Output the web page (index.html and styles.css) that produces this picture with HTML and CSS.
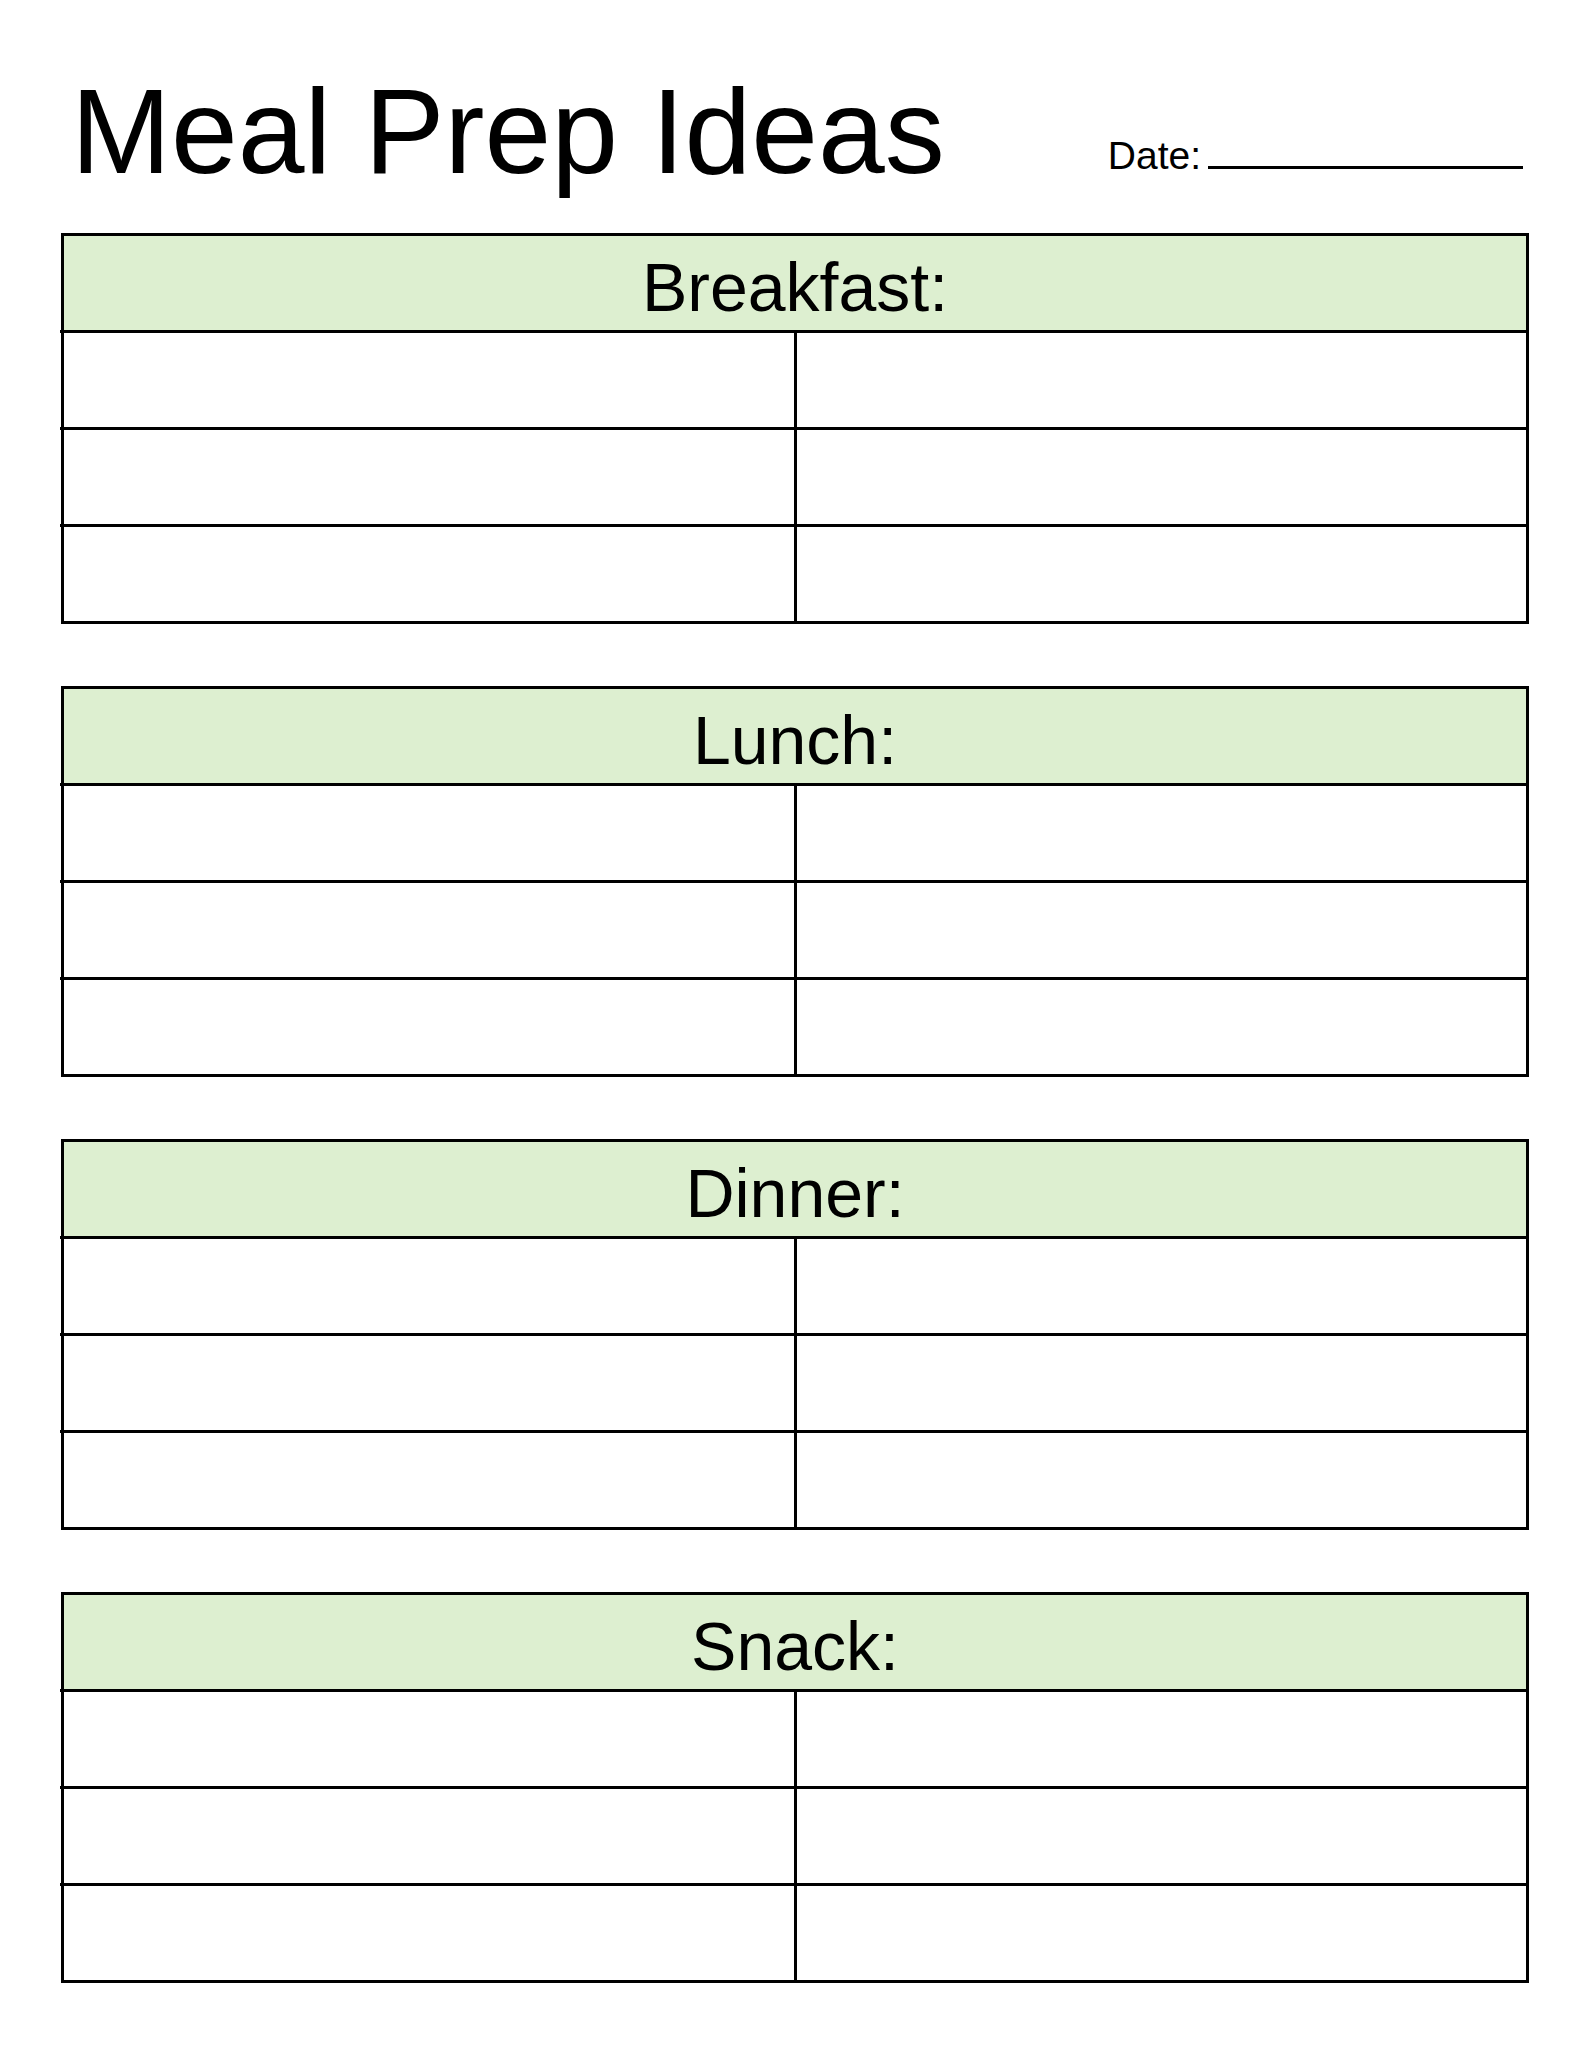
FILE: index.html
```html
<!DOCTYPE html>
<html lang="en">
<head>
<meta charset="utf-8">
<title>Meal Prep Ideas</title>
<link rel="stylesheet" href="styles.css">
</head>
<body>
<div class="page">
  <header class="top">
    <h1 class="title">Meal Prep Ideas</h1>
    <div class="date">Date:<span class="date-line"></span></div>
  </header>

  <section class="meal">
    <div class="meal-head">Breakfast:</div>
    <div class="row"><div class="cell"></div><div class="cell"></div></div>
    <div class="row"><div class="cell"></div><div class="cell"></div></div>
    <div class="row"><div class="cell"></div><div class="cell"></div></div>
  </section>

  <section class="meal">
    <div class="meal-head">Lunch:</div>
    <div class="row"><div class="cell"></div><div class="cell"></div></div>
    <div class="row"><div class="cell"></div><div class="cell"></div></div>
    <div class="row"><div class="cell"></div><div class="cell"></div></div>
  </section>

  <section class="meal">
    <div class="meal-head">Dinner:</div>
    <div class="row"><div class="cell"></div><div class="cell"></div></div>
    <div class="row"><div class="cell"></div><div class="cell"></div></div>
    <div class="row"><div class="cell"></div><div class="cell"></div></div>
  </section>

  <section class="meal">
    <div class="meal-head">Snack:</div>
    <div class="row"><div class="cell"></div><div class="cell"></div></div>
    <div class="row"><div class="cell"></div><div class="cell"></div></div>
    <div class="row"><div class="cell"></div><div class="cell"></div></div>
  </section>
</div>
</body>
</html>
```

FILE: styles.css
```css
html, body {
  margin: 0;
  padding: 0;
  background: #ffffff;
}

body {
  font-family: "Liberation Sans", Arial, sans-serif;
  color: #000000;
}

.page {
  width: 1468px;
  padding: 71px 54px 60px 61px;
  display: flex;
  flex-direction: column;
  gap: 62px;
}

.top {
  display: flex;
  align-items: flex-end;
  justify-content: space-between;
  padding: 0 6px 0 10px;
  margin-bottom: -20px;
}

.title {
  margin: 0;
  font-size: 120px;
  line-height: 120px;
  font-weight: normal;
}

.date {
  font-size: 39px;
  line-height: 39px;
  margin-bottom: 16px;
}

.date-line {
  display: inline-block;
  width: 315px;
  height: 0;
  margin-left: 7px;
  border-bottom: 3px solid #000000;
  vertical-align: baseline;
}

.meal {
  border: 3px solid #000000;
  display: flex;
  flex-direction: column;
}

.meal-head {
  box-sizing: content-box;
  height: 87px;
  padding-top: 7px;
  background: #ddefd0;
  display: flex;
  align-items: center;
  justify-content: center;
  font-size: 68px;
  line-height: 1;
  border-bottom: 3px solid #000000;
  position: relative;
}

.row {
  display: grid;
  grid-template-columns: calc(50% + 2px) 1fr;
  height: 94px;
  border-bottom: 3px solid #000000;
  position: relative;
}

.row:last-child {
  border-bottom: none;
}

.meal-head::after,
.row:not(:last-child)::after {
  content: "";
  position: absolute;
  left: -4px;
  bottom: -3px;
  width: 4px;
  height: 3px;
  background: #000000;
}

.cell:first-child {
  border-right: 3px solid #000000;
}
```
